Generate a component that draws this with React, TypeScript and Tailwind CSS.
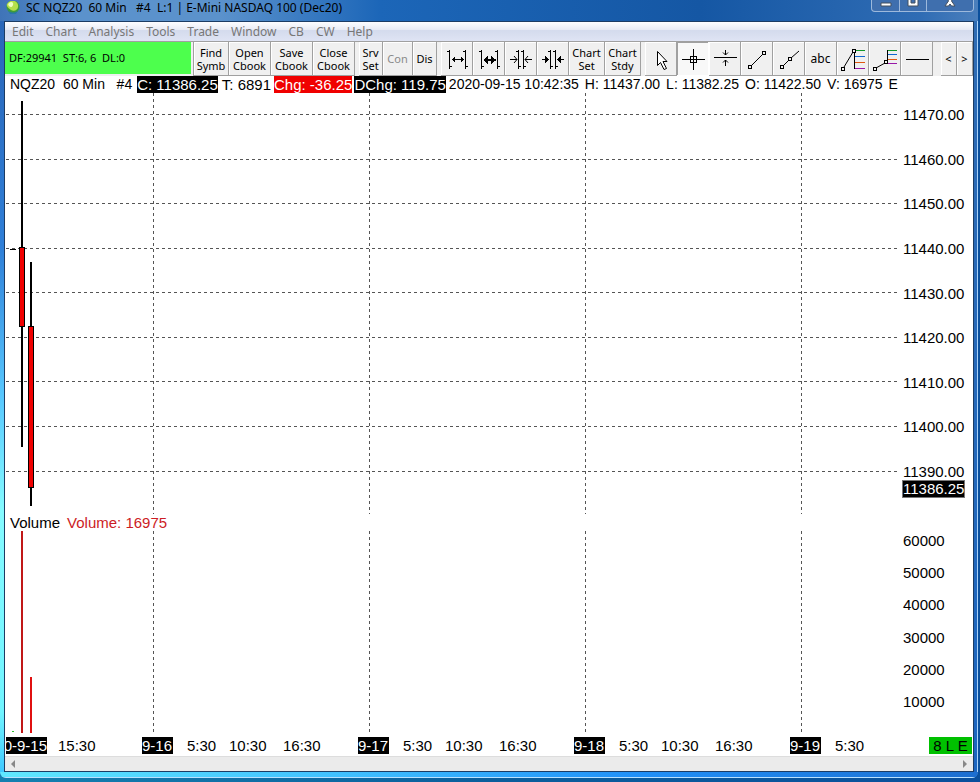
import type { ReactNode } from "react";

type Candle = {
  x: number;
  open: number;
  high: number;
  low: number;
  close: number;
};

const PRICE_TOP = 11474.8;
const PRICE_BOTTOM = 11380.4;
const VOLUME_TOP = 62700;
const FIRST_DAY_X = 148;
const DAY_WIDTH = 216;

const menuItems = ["Edit", "Chart", "Analysis", "Tools", "Trade", "Window", "CB", "CW", "Help"];

const prices = [11470, 11460, 11450, 11440, 11430, 11420, 11410, 11400, 11390];
const volumes = [60000, 50000, 40000, 30000, 20000, 10000];

const candles: Candle[] = [
  { x: 17, open: 11440.25, high: 11473, low: 11395.5, close: 11422.5 },
  { x: 26, open: 11422.5, high: 11437, low: 11382.25, close: 11386.25 },
];

const volumeBars = [
  { x: 17, value: 70000, color: "#c01818" },
  { x: 26, value: 17300, color: "#e01010" },
];

const days = [
  { date: "9-16", times: ["5:30", "10:30", "16:30"] },
  { date: "9-17", times: ["5:30", "10:30", "16:30"] },
  { date: "9-18", times: ["5:30", "10:30", "16:30"] },
  { date: "9-19", times: ["5:30"] },
];

const priceY = (price: number) =>
  `${((PRICE_TOP - price) / (PRICE_TOP - PRICE_BOTTOM)) * 100}%`;

const priceSpan = (a: number, b: number) =>
  `${(Math.abs(a - b) / (PRICE_TOP - PRICE_BOTTOM)) * 100}%`;

const volumeY = (volume: number) =>
  `${(Math.max(0, VOLUME_TOP - volume) / VOLUME_TOP) * 100}%`;

function ToolButton({
  label,
  width = "w-8",
  disabled,
  pressed,
  children,
}: {
  label?: string;
  width?: string;
  disabled?: boolean;
  pressed?: boolean;
  children: ReactNode;
}) {
  return (
    <button
      type="button"
      aria-label={label}
      disabled={disabled}
      className={`flex h-full shrink-0 items-center justify-center border-r border-b text-center text-[11px] leading-[13px] whitespace-pre ${width} ${
        disabled ? "text-[#8a8a8a]" : "text-black"
      } ${
        pressed
          ? "border-white bg-[#f8f8f8] shadow-[inset_1px_1px_0_#a0a0a0]"
          : "border-[#a0a0a0] bg-[#f0f0f0] shadow-[inset_1px_1px_0_#fff]"
      }`}
    >
      {children}
    </button>
  );
}

function Glyph({ children }: { children: ReactNode }) {
  return (
    <svg
      viewBox="0 0 31 33"
      className="h-[33px] w-[31px] shrink-0"
      fill="none"
      stroke="#000"
      shapeRendering="crispEdges"
      aria-hidden="true"
    >
      {children}
    </svg>
  );
}

const fanColors = ["#109828", "#1068d0", "#e05810", "#9818a8"];

function Fan({ x, levels }: { x: number; levels: number[] }) {
  return (
    <>
      {levels.map((y, i) => (
        <path key={y} d={`M${x} ${y}H28`} stroke={fanColors[i]} />
      ))}
    </>
  );
}

function DayLines() {
  return (
    <>
      {[0, 1, 2, 3].map((day) => (
        <line
          key={day}
          x1={FIRST_DAY_X + day * DAY_WIDTH + 0.5}
          x2={FIRST_DAY_X + day * DAY_WIDTH + 0.5}
          y1="0"
          y2="100%"
          stroke="#555"
          strokeDasharray="3 3"
        />
      ))}
    </>
  );
}

function TitleBar() {
  return (
    <header className="flex h-[21px] shrink-0 items-start justify-between pr-1 pl-1.5">
      <div className="flex h-[15px] items-center gap-1.5">
        <svg viewBox="0 0 14 14" className="h-3.5 w-3.5" aria-hidden="true">
          <circle cx="7" cy="6" r="6.500" fill="#3f9a3a" />
          <path d="M1 3C4-2 11-1 12 4S8 11 5 9 0 5 1 3Z" fill="#b6e04a" />
          <path d="M3 2c2-2 5-1 4 2S4 6 3 5s-1-2 0-3Z" fill="#efffc0" />
          <path d="M1 8c2 4 8 5 11 1l-2 4H4Z" fill="#2878a8" />
        </svg>
        <h1 className="text-xs leading-[15px] whitespace-pre text-black">
          {"SC NQZ20  60 Min   #4  L:1 | E-Mini NASDAQ 100 (Dec20)"}
        </h1>
      </div>
      <div className="flex h-3 rounded-b border border-t-0 border-[#9db9dc] bg-[#3f6fae]">
        <button type="button" aria-label="Minimize" className="flex w-7 justify-center border-r border-[#9db9dc]">
          <svg viewBox="0 0 12 8" className="h-2 w-3">
            <path d="M1 3h10v3H1z" fill="#fff" stroke="#45505f" />
          </svg>
        </button>
        <button type="button" aria-label="Maximize" className="flex w-[27px] justify-center border-r border-[#9db9dc]">
          <svg viewBox="0 0 12 8" className="h-2 w-3">
            <path d="M1-2v8h10v-8H8v5H4v-5Z" fill="#fff" stroke="#45505f" />
          </svg>
        </button>
        <button type="button" aria-label="Close" className="flex w-[46px] justify-center">
          <svg viewBox="0 0 12 8" className="h-2 w-3">
            <path d="M3-2 4.500 1 1 6h3.500L6 4l1.500 2H11L7.500 1 9-2Z" fill="#fff" stroke="#45505f" />
          </svg>
        </button>
      </div>
    </header>
  );
}

function Toolbar() {
  return (
    <div className="flex h-[35px] shrink-0 overflow-hidden border-t border-[#a0a0a0] bg-[#f0f0f0]">
      <output className="mr-0.5 flex h-8 w-[186px] shrink-0 items-center bg-[#4dff4d] pl-1 text-[11px] whitespace-pre text-black">
        {"DF:29941  ST:6, 6  DL:0"}
      </output>
      <div className="mr-1 flex shrink-0 border-l border-[#a0a0a0]">
        <ToolButton width="w-[35px]">{"Find\nSymb"}</ToolButton>
        <ToolButton width="w-[42px]">{"Open\nCbook"}</ToolButton>
        <ToolButton width="w-[42px]">{"Save\nCbook"}</ToolButton>
        <ToolButton width="w-[42px]">{"Close\nCbook"}</ToolButton>
      </div>
      <div className="mr-1 flex shrink-0">
        <ToolButton width="w-6">{"Srv\nSet"}</ToolButton>
        <ToolButton width="w-[30px]" disabled>
          Con
        </ToolButton>
        <ToolButton width="w-6">Dis</ToolButton>
      </div>
      <div className="mr-1 flex shrink-0">
        <ToolButton label="Increase bar spacing">
          <Glyph>
            <path d="M8.500 8v19M6 9.500h3M8 24.500h3M24.500 8v19M22 9.500h3M24 24.500h3M11 17.500h12M13.500 15v5M12.500 16v3M20.500 15v5M21.500 16v3" />
          </Glyph>
        </ToolButton>
        <ToolButton label="Increase bar width">
          <Glyph>
            <path d="M8.500 8v19M6 9.500h3M8 24.500h3M24.500 8v19M22 9.500h3M24 24.500h3M11 17.500h12M11 18.500h12" />
            <path d="m10 18 5-4v8Zm13 0-5-4v8Z" fill="#000" stroke="none" />
          </Glyph>
        </ToolButton>
        <ToolButton label="Decrease bar spacing">
          <Glyph>
            <path d="M13.500 8v19M11 9.500h3M13 24.500h3M18.500 8v19M16 9.500h3M18 24.500h3M5 17.500h7M20 17.500h7" />
            <path d="m9 14 3 3.500L9 21M23 14l-3 3.500 3 3.500" shapeRendering="auto" />
          </Glyph>
        </ToolButton>
        <ToolButton label="Decrease bar width">
          <Glyph>
            <path d="M13.500 8v19M11 9.500h3M13 24.500h3M18.500 8v19M16 9.500h3M18 24.500h3M5 17.500h7M20 17.500h7" />
            <path d="m12 17.500-4-4v8Zm8 0 4-4v8Z" fill="#000" stroke="none" />
          </Glyph>
        </ToolButton>
        <ToolButton width="w-9">{"Chart\nSet"}</ToolButton>
        <ToolButton width="w-9">{"Chart\nStdy"}</ToolButton>
      </div>
      <div className="flex shrink-0">
        <ToolButton label="Pointer">
          <Glyph>
            <path d="M12.500 9.500v14l3-3 3.500 7 2.500-1-3.500-7h4Z" fill="#fff" shapeRendering="auto" />
          </Glyph>
        </ToolButton>
        <ToolButton label="Crosshair" pressed>
          <Glyph>
            <path d="M5 17.500h23M16.500 7v21M13.500 14.500h6v6h-6Z" />
          </Glyph>
        </ToolButton>
        <ToolButton label="Horizontal crosshair">
          <Glyph>
            <path d="M5 15.500h23M16.500 8v5M16.500 18v6" />
            <path d="m14 10.500 2.500 2.500 2.500-2.500M14 20.500l2.500-2.500 2.500 2.500" shapeRendering="auto" />
          </Glyph>
        </ToolButton>
        <ToolButton label="Line">
          <Glyph>
            <path d="M10 24 22 12" shapeRendering="auto" />
            <path d="M7.500 23.500h3v3h-3ZM21.500 9.500h3v3h-3Z" />
          </Glyph>
        </ToolButton>
        <ToolButton label="Ray">
          <Glyph>
            <path d="m10 24 5-5M18 16l8-7" shapeRendering="auto" />
            <path d="M7.500 23.500h3v3h-3ZM15.500 15.500h3v3h-3Z" />
          </Glyph>
        </ToolButton>
        <ToolButton label="Text">
          <span className="text-xs">abc</span>
        </ToolButton>
        <ToolButton label="Price retracement">
          <Glyph>
            <Fan x={17} levels={[8.5, 14.5, 20.5, 26.5]} />
            <path d="M17.500 9v18" />
            <path d="M7 25 16 10" shapeRendering="auto" />
            <path d="M4.500 25.500h3v3h-3ZM15.500 7.500h3v3h-3Z" fill="#f0f0f0" />
          </Glyph>
        </ToolButton>
        <ToolButton label="Price projection">
          <Glyph>
            <Fan x={18} levels={[8.5, 12.5, 17.5, 21.5]} />
            <path d="M18.500 8v13" />
            <path d="m7 26 9-5" shapeRendering="auto" />
            <path d="M4.500 25.500h3v3h-3ZM15.500 18.500h3v3h-3Z" fill="#f0f0f0" />
          </Glyph>
        </ToolButton>
        <ToolButton label="Horizontal line">
          <Glyph>
            <path d="M5 17.500h23" />
          </Glyph>
        </ToolButton>
      </div>
      <div className="ml-auto flex shrink-0">
        <ToolButton width="w-4" label="Scroll left">
          {"<"}
        </ToolButton>
        <ToolButton width="w-4" label="Scroll right">
          {">"}
        </ToolButton>
      </div>
    </div>
  );
}

function ChartHeader() {
  return (
    <div className="mr-[74px] flex h-[17px] shrink-0 overflow-hidden pl-[5px] leading-[17px] whitespace-pre">
      <span className="mr-[5px] text-sm leading-[17px]">{"NQZ20  60 Min   #4"}</span>
      <span className="mr-1 bg-black text-white">C: 11386.25</span>
      <span className="mr-[3px]">T: 6891</span>
      <span className="mr-0.5 bg-[#f00000] text-white">Chg: -36.25</span>
      <span className="mr-[3px] bg-black text-white">DChg: 119.75</span>
      <div className="flex gap-1.5 text-sm leading-[17px]">
        <span>2020-09-15 10:42:35</span>
        <span>H: 11437.00</span>
        <span>L: 11382.25</span>
        <span>O: 11422.50</span>
        <span>V: 16975</span>
        <span>E</span>
      </div>
    </div>
  );
}

function PricePane() {
  return (
    <section className="flex min-h-0 flex-[421_1_0%]">
      <svg className="h-full min-w-0 flex-1" shapeRendering="crispEdges" role="img" aria-label="60 minute price bars">
        {prices.map((price) => (
          <line
            key={price}
            x1="1"
            x2="100%"
            y1={priceY(price)}
            y2={priceY(price)}
            stroke="#555"
            strokeDasharray="3 3"
          />
        ))}
        <DayLines />
        <line x1="5" x2="11" y1={priceY(11439.7)} y2={priceY(11439.7)} stroke="#000" />
        {candles.map(({ x, open, high, low, close }) => (
          <g key={x}>
            <line x1={x} x2={x} y1={priceY(high)} y2={priceY(low)} stroke="#000" strokeWidth="2" />
            <rect
              x={x - 2.5}
              y={priceY(open)}
              width="5"
              height={priceSpan(open, close)}
              fill="#f00000"
              stroke="#000"
            />
          </g>
        ))}
      </svg>
      <div className="relative flex w-[74px] shrink-0 flex-col justify-between pt-3 pb-8 pl-1 leading-5">
        {prices.map((price) => (
          <span key={price}>{price.toFixed(2)}</span>
        ))}
        <span
          className="absolute left-[3px] -translate-y-1/2 border border-[#777] bg-black leading-4 text-white"
          style={{ top: priceY(11386.1) }}
        >
          11386.25
        </span>
      </div>
    </section>
  );
}

function VolumePane() {
  return (
    <section className="flex min-h-0 flex-[202_1_0%]">
      <svg className="h-full min-w-0 flex-1" shapeRendering="crispEdges" role="img" aria-label="Volume bars">
        <DayLines />
        <line x1="7" x2="9" y1="99.5%" y2="99.5%" stroke="#30c030" />
        {volumeBars.map((bar) => (
          <line
            key={bar.x}
            x1={bar.x}
            x2={bar.x}
            y1={volumeY(bar.value)}
            y2="100%"
            stroke={bar.color}
            strokeWidth="2"
          />
        ))}
      </svg>
      <div className="flex w-[74px] shrink-0 flex-col justify-between pb-[21px] pl-1 leading-5">
        {volumes.map((volume) => (
          <span key={volume}>{volume}</span>
        ))}
      </div>
    </section>
  );
}

function TimeAxis() {
  return (
    <div className="flex min-w-0 flex-1 overflow-hidden">
      <div className="flex w-[137px] shrink-0 gap-[11px] pl-px">
        <span className="flex h-[17px] w-[41px] justify-end overflow-hidden bg-black whitespace-nowrap text-white">
          0-9-15
        </span>
        <span>15:30</span>
      </div>
      {days.map((day) => (
        <div key={day.date} className="grid w-[216px] shrink-0 grid-cols-[45px_42px_54px_75px]">
          <span className="h-[17px] w-[31px] bg-black text-white">{day.date}</span>
          {day.times.map((time) => (
            <span key={time}>{time}</span>
          ))}
        </div>
      ))}
    </div>
  );
}

export default function App() {
  return (
    <div className="flex h-screen min-h-[480px] flex-col bg-[linear-gradient(90deg,#1580b0,#0a5e9c_50%,#0a4f9c)] pr-0.5 font-['Noto_Sans',sans-serif]">
      <div className="mb-1 flex min-h-0 flex-1 flex-col overflow-hidden rounded-b-md bg-[linear-gradient(90deg,#3f74b8_0,#5b92cc_80px,#5b92cc_220px,#1c66b8_380px,#1557a4_700px,#2f6cb4_920px,#4b7fbc)]">
        <TitleBar />
        <div className="flex min-h-0 flex-1 bg-[linear-gradient(180deg,#2a66b8,#2f7fd8_30%,#58c8ff_50%,#84faff_65%,#70f4ff_92%,#40c8ff)]">
          <div className="w-1 shrink-0" />
          <main className="flex min-w-0 flex-1 flex-col border border-[#1c3c64] bg-white font-['Liberation_Sans',sans-serif] text-[15px] text-black">
            <nav className="flex h-[19px] shrink-0 items-center gap-3 bg-[linear-gradient(180deg,#fdfdff,#e8ebf5_40%,#d4dbed_45%,#dfe4f4)] pl-[7px] font-['Noto_Sans',sans-serif] text-xs text-[#777]">
              {menuItems.map((item) => (
                <button key={item} type="button">
                  {item}
                </button>
              ))}
            </nav>
            <div className="font-['Noto_Sans',sans-serif]">
              <Toolbar />
            </div>
            <ChartHeader />
            <PricePane />
            <div className="flex h-[17px] shrink-0 gap-[7px] pl-[5px] leading-[17px]">
              <h2>Volume</h2>
              <span className="text-[#cc1c24]">Volume: 16975</span>
            </div>
            <VolumePane />
            <div className="flex shrink-0 pt-1 pr-px pb-0.5 leading-[17px]">
              <TimeAxis />
              <span className="w-[43px] shrink-0 bg-[#00c000] text-center">8 L E</span>
            </div>
            <div className="flex h-[15px] shrink-0 items-center justify-between border-t border-[#ddd] bg-[#ebebeb] px-1.5">
              <button type="button" aria-label="Scroll chart left">
                <svg viewBox="0 0 4 8" className="h-2 w-1">
                  <path d="M4 0v8L0 4Z" fill="#888" />
                </svg>
              </button>
              <button type="button" aria-label="Scroll chart right">
                <svg viewBox="0 0 4 8" className="h-2 w-1">
                  <path d="M0 0v8l4-4Z" fill="#888" />
                </svg>
              </button>
            </div>
          </main>
          <div className="w-1 shrink-0 border-r border-[#a8d0f8] bg-[linear-gradient(180deg,#2f6cb4,#1c66c0)]" />
        </div>
        <div className="h-1.5 shrink-0 border-b border-[#b8e0ff] bg-[linear-gradient(90deg,#60e8ff,#40c0ff_35%,#2090f8_65%,#1c6ed0)]" />
      </div>
    </div>
  );
}
